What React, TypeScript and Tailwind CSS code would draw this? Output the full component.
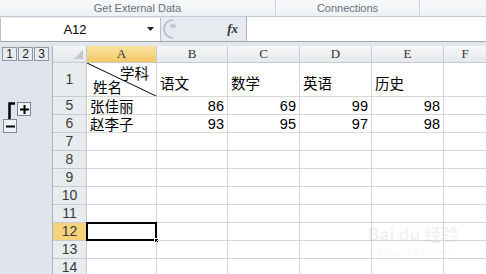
import React from "react";

const grid = "border-[#d6d9dc]";
const widths = ["w-[70px]", "w-[71px]", "w-[72px]", "w-[72px]", "w-[72px]"];
const cjk = { fontFamily: '"Noto Sans CJK SC", "Liberation Sans", sans-serif' };

type RowData = { n: string; cells?: (string | number)[]; active?: boolean };

const rows: RowData[] = [
  { n: "5", cells: ["张佳丽", 86, 69, 99, 98] },
  { n: "6", cells: ["赵李子", 93, 95, 97, 98] },
  { n: "7" },
  { n: "8" },
  { n: "9" },
  { n: "10" },
  { n: "11" },
  { n: "12", active: true },
  { n: "13" },
  { n: "14" },
];

function RowHead({ label, active }: { label: string; active?: boolean }) {
  return (
    <div
      className={`w-[34px] shrink-0 flex items-center justify-center border-r border-b border-[#c5cad0] text-[14px] text-[#3a3a3a] ${
        active ? "bg-[#f6d37a]" : "bg-[#e9ecef]"
      }`}
      style={{ fontFamily: '"Liberation Sans", sans-serif' }}
    >
      {label}
    </div>
  );
}

function SheetRow({ row }: { row: RowData }) {
  return (
    <div className="flex h-[18px]">
      <RowHead label={row.n} active={row.active} />
      {widths.map((w, i) => {
        const v = row.cells?.[i];
        const isNum = typeof v === "number";
        return (
          <div
            key={i}
            className={`${w} shrink-0 relative flex items-center border-r border-b ${grid} ${
              isNum ? "justify-end pr-[3px]" : "pl-[3px]"
            } text-[14.5px] leading-[16px] text-black`}
            style={isNum ? { fontFamily: '"Liberation Sans", sans-serif' } : cjk}
          >
            {v}
            {row.active && i === 0 && (
              <div className="absolute left-[-1px] top-[-1px] right-[-1px] bottom-[-1px] border-2 border-black">
                <div className="absolute right-[-4px] bottom-[-4px] w-[5px] h-[5px] bg-black border border-white" />
              </div>
            )}
          </div>
        );
      })}
      <div className={`flex-1 border-b ${grid}`} />
    </div>
  );
}

export default function App() {
  return (
    <div className="w-[486px] h-[274px] overflow-hidden relative bg-white" style={{ fontFamily: '"Liberation Sans", sans-serif' }}>
      {/* ribbon group labels */}
      <div className="h-[17px] flex border-b border-[#c3c9d1] bg-gradient-to-b from-[#f7f8fa] to-[#eef1f4] text-[11px] text-[#6b717a]">
        <div className="w-[276px] flex items-center justify-center border-r border-[#d0d5db]">Get External Data</div>
        <div className="w-[144px] flex items-center justify-center border-r border-[#d0d5db]">Connections</div>
        <div className="flex-1" />
      </div>

      {/* formula bar */}
      <div className="h-[25px] flex border-b border-[#9ea6b0] bg-[#e7eaee]">
        <div className="w-[161px] flex items-center bg-white border-l border-r border-[#b9c0c8] mt-[1px]">
          <div className="flex-1 text-center text-[13px] text-black pl-[2px]">A12</div>
          <svg width="8" height="5" viewBox="0 0 8 5" className="mr-[5px]">
            <path d="M0 0 H7 L3.5 4 Z" fill="#222" />
          </svg>
        </div>
        <div className="w-[85px] flex items-center">
          <svg width="14" height="20" viewBox="0 0 14 20" className="ml-[2px]">
            <path d="M10 1 A9 9 0 0 0 10 19" fill="none" stroke="#b3b9c1" strokeWidth="1.5" />
            <ellipse cx="10" cy="7" rx="3" ry="2" fill="#c6cbd1" />
          </svg>
          <div className="flex-1" />
          <span className="mr-[8px] text-[13px] italic font-bold text-[#333]" style={{ fontFamily: '"Liberation Serif", serif' }}>
            fx
          </span>
        </div>
        <div className="flex-1 bg-white border-l border-[#a9b0b9]" />
      </div>
      <div className="h-[4px] bg-[#e3e7ec]" />

      <div className="flex">
        {/* outline gutter */}
        <div className="w-[53px] shrink-0 h-[230px] bg-[#dfe3ec] border-r border-[#aab2bd]">
          <div className="flex gap-[1px] pl-[2px] pt-[1px]">
            {["1", "2", "3"].map((t) => (
              <div
                key={t}
                className="w-[15px] h-[14px] flex items-center justify-center border border-[#8f98a4] bg-[#e8ecf1] text-[12px] text-[#222]"
              >
                {t}
              </div>
            ))}
          </div>
          <div className="flex mt-[41px] pl-[7px]">
            <svg width="9" height="17" viewBox="0 0 9 17">
              <path d="M8 1.5 H2.5 V17" fill="none" stroke="#000" strokeWidth="2.5" />
            </svg>
            <div className="w-[14px] h-[14px] ml-[1px] flex items-center justify-center border border-[#7d8793] bg-[#eef1f5]">
              <svg width="9" height="9" viewBox="0 0 9 9">
                <path d="M4.5 0 V9 M0 4.5 H9" stroke="#000" strokeWidth="2" />
              </svg>
            </div>
          </div>
          <div className="ml-[3px] w-[14px] h-[14px] flex items-center justify-center border border-[#7d8793] bg-[#eef1f5]">
            <svg width="9" height="3" viewBox="0 0 9 3">
              <path d="M0 1.5 H9" stroke="#000" strokeWidth="2" />
            </svg>
          </div>
        </div>

        {/* sheet */}
        <div className="flex-1">
          <div className="flex h-[17px]">
            <div className="w-[34px] shrink-0 flex items-end justify-end pr-[3px] pb-[3px] border-r border-b border-[#c5cad0] bg-gradient-to-b from-[#f4f5f7] to-[#e4e7ea]">
              <svg width="9" height="9" viewBox="0 0 9 9">
                <path d="M9 0 V9 H0 Z" fill="#c3c7cc" />
              </svg>
            </div>
            {["A", "B", "C", "D", "E"].map((c, i) => (
              <div
                key={c}
                className={`${widths[i]} shrink-0 flex items-center justify-center border-r border-b border-[#c5cad0] text-[13px] text-[#333] ${
                  i === 0 ? "bg-gradient-to-b from-[#fbe3a0] to-[#f3c865]" : "bg-gradient-to-b from-[#f6f7f8] to-[#e6e9ec]"
                }`}
                style={{ fontFamily: '"Liberation Serif", serif' }}
              >
                {c}
              </div>
            ))}
            <div
              className="flex-1 flex items-center justify-center border-b border-[#c5cad0] bg-gradient-to-b from-[#f6f7f8] to-[#e6e9ec] text-[13px] text-[#333]"
              style={{ fontFamily: '"Liberation Serif", serif' }}
            >
              F
            </div>
          </div>

          <div className="flex h-[34px]">
            <RowHead label="1" />
            <div className={`w-[70px] shrink-0 relative border-r border-b ${grid} text-[14.5px] leading-[16px]`} style={cjk}>
              <svg className="absolute inset-0" width="69" height="33" viewBox="0 0 69 33">
                <line x1="0" y1="0" x2="69" y2="33" stroke="#000" strokeWidth="1" />
              </svg>
              <span className="absolute top-[2px] right-[7px]">学科</span>
              <span className="absolute bottom-[1px] left-[6px]">姓名</span>
            </div>
            {["语文", "数学", "英语", "历史"].map((t, i) => (
              <div
                key={t}
                className={`${widths[i + 1]} shrink-0 flex items-end pb-[5px] pl-[3px] border-r border-b ${grid} text-[14.5px] leading-[16px]`}
                style={cjk}
              >
                {t}
              </div>
            ))}
            <div className={`flex-1 border-b ${grid}`} />
          </div>

          {rows.map((r) => (
            <SheetRow key={r.n} row={r} />
          ))}
        </div>
      </div>

      {/* watermark */}
      <div className="absolute left-[370px] top-[224px] w-[86px] flex flex-col items-center gap-[3px] text-[#000]/[0.06] pointer-events-none">
        <div className="text-[17px] font-bold leading-[20px] whitespace-nowrap" style={cjk}>
          Bai du 经验
        </div>
        <div className="text-[9px] leading-[10px] whitespace-nowrap">jingyan.baidu.com</div>
      </div>
    </div>
  );
}
